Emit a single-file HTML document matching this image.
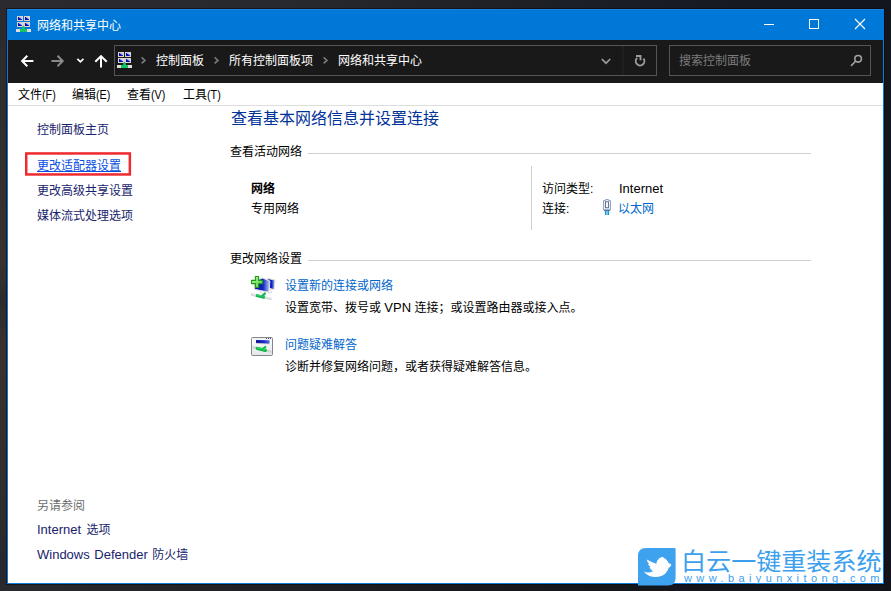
<!DOCTYPE html>
<html lang="zh-CN">
<head>
<meta charset="utf-8">
<title>网络和共享中心</title>
<style>
*{box-sizing:border-box;margin:0;padding:0}
html,body{width:891px;height:591px;overflow:hidden}
body{position:relative;font-family:"Liberation Sans","Noto Sans CJK SC",sans-serif;font-size:12px;line-height:16px;color:#000;
background:linear-gradient(113deg,#2a2a2f 0%,#28292e 25%,#212228 40%,#1d1f26 50%,#181a21 62%,#14161e 75%,#12131b 100%)}
a{text-decoration:none;color:inherit}
.a{position:absolute;white-space:nowrap;font-size:12px;line-height:16px}
#win{position:absolute;left:7px;top:9px;width:877px;height:575px;background:#fff;border:1px solid #0b7bdb;border-top:0;box-shadow:0 0 0 1px rgba(14,8,10,.6)}
#lstrip{position:absolute;left:0;top:0;width:6px;height:591px;background:linear-gradient(180deg,rgba(58,52,48,0) 0%,rgba(58,52,48,.55) 28%,rgba(58,52,48,.9) 44%,rgba(58,52,48,.1) 51%,rgba(58,52,48,.9) 58%,rgba(56,50,46,.7) 76%,rgba(56,50,46,0) 95%)}
#title{position:absolute;left:7px;top:9px;width:877px;height:31px;background:#0078d7;border-top:1px solid #1a85e0}
#nav{position:absolute;left:8px;top:40px;width:875px;height:43px;background:#191919}
.box{position:absolute;top:45px;height:31px;border:1px solid #555}
#addr{left:114px;width:543px}
#search{left:669px;width:202px}
#menuline{position:absolute;left:8px;top:105px;width:875px;height:1px;background:#dedede}
.en{font-size:13px}
.mn{display:inline-block;font-size:13.5px;transform:scaleX(.8);transform-origin:0 50%}
.w{color:#fff}
.nv{color:#17236c}
.lk{color:#0066cc}
.hr{position:absolute;height:1px;background:#d0d0d0}
.vr{position:absolute;width:1px;background:#d0d0d0}
.cj{display:inline-block;vertical-align:top;white-space:nowrap;font-family:"Liberation Sans","Noto Sans CJK SC",sans-serif}
svg{position:absolute;overflow:visible}
</style>
</head>
<body>
<div id="lstrip"></div>
<div id="win"></div>

<!-- title bar -->
<div id="title"></div>
<div class="a w" style="left:37px;top:18px"><span class="cj" style="width:7em">网络和共享中心</span></div>

<!-- navigation bar -->
<div id="nav"></div>
<div class="box" id="addr"></div>
<div class="box" id="search"></div>
<div class="a w" style="left:156px;top:53px"><span class="cj" style="width:4em">控制面板</span></div>
<div class="a w" style="left:229px;top:53px"><span class="cj" style="width:7em">所有控制面板项</span></div>
<div class="a w" style="left:338px;top:53px"><span class="cj" style="width:7em">网络和共享中心</span></div>
<div class="a" style="left:679px;top:53px;color:#7c7c7c"><span class="cj" style="width:6em">搜索控制面板</span></div>

<!-- menu bar -->
<div class="a" style="left:18px;top:87px"><span class="cj" style="width:2em">文件</span><span class="mn">(F)</span></div>
<div class="a" style="left:72px;top:87px"><span class="cj" style="width:2em">编辑</span><span class="mn">(E)</span></div>
<div class="a" style="left:127px;top:87px"><span class="cj" style="width:2em">查看</span><span class="mn">(V)</span></div>
<div class="a" style="left:183px;top:87px"><span class="cj" style="width:2em">工具</span><span class="mn">(T)</span></div>
<div id="menuline"></div>

<!-- left pane -->
<a class="a nv" style="left:37px;top:122px"><span class="cj" style="width:6em">控制面板主页</span></a>
<a class="a" style="left:37px;top:158px;color:#0a50e0"><span class="cj" style="width:7em">更改适配器设置</span></a>
<a class="a nv" style="left:37px;top:183px"><span class="cj" style="width:8em">更改高级共享设置</span></a>
<a class="a nv" style="left:37px;top:208px"><span class="cj" style="width:8em">媒体流式处理选项</span></a>
<div class="a" style="left:37px;top:498px;color:#6d6d6d"><span class="cj" style="width:4em">另请参阅</span></div>
<a class="a nv" style="left:37px;top:522px;word-spacing:2px"><span class="en">Internet</span> <span class="cj" style="width:2em">选项</span></a>
<a class="a nv" style="left:37px;top:547px;word-spacing:1px"><span class="en">Windows Defender</span> <span class="cj" style="width:3em">防火墙</span></a>

<!-- main pane -->
<div class="a" style="left:231px;top:108px;font-size:16px;line-height:22px;color:#003399"><span class="cj" style="width:13em">查看基本网络信息并设置连接</span></div>
<div class="a" style="left:230px;top:144px"><span class="cj" style="width:6em">查看活动网络</span></div>
<div class="hr" style="left:308px;top:153px;width:503px"></div>
<div class="a" style="left:251px;top:181px;font-weight:bold"><span class="cj" style="width:2em">网络</span></div>
<div class="a" style="left:251px;top:201px"><span class="cj" style="width:4em">专用网络</span></div>
<div class="vr" style="left:531px;top:166px;height:64px"></div>
<div class="a" style="left:542px;top:181px"><span class="cj" style="width:4em">访问类型</span>:</div>
<div class="a" style="left:619px;top:181px"><span class="en">Internet</span></div>
<div class="a" style="left:542px;top:201px"><span class="cj" style="width:2em">连接</span>:</div>
<a class="a lk" style="left:618px;top:201px"><span class="cj" style="width:3em">以太网</span></a>

<div class="a" style="left:230px;top:251px"><span class="cj" style="width:6em">更改网络设置</span></div>
<div class="hr" style="left:308px;top:260px;width:503px"></div>
<a class="a lk" style="left:285px;top:278px"><span class="cj" style="width:9em">设置新的连接或网络</span></a>
<div class="a" style="left:285px;top:300px"><span class="cj" style="width:8em">设置宽带、拨号或</span> <span class="en">VPN</span> <span class="cj" style="width:14em">连接；或设置路由器或接入点。</span></div>
<a class="a lk" style="left:285px;top:337px"><span class="cj" style="width:6em">问题疑难解答</span></a>
<div class="a" style="left:285px;top:359px"><span class="cj" style="width:21em">诊断并修复网络问题，或者获得疑难解答信息。</span></div>


<!-- vector overlay: all icons drawn in page coordinates -->
<svg width="891" height="591" viewBox="0 0 891 591" style="left:0;top:0">
<defs>
  <linearGradient id="scr" x1="0" y1="1" x2="1" y2="0">
    <stop offset="0" stop-color="#00008c"/><stop offset=".5" stop-color="#0a14c8"/><stop offset=".62" stop-color="#9db4f5"/><stop offset="1" stop-color="#dfe8ff"/>
  </linearGradient>
  <g id="nsc">
    <rect x="1" y="0" width="6" height="5" fill="#dfd2c6"/><rect x="8" y="0" width="6" height="5" fill="#dfd2c6"/>
    <rect x="1" y="6" width="6" height="5" fill="#dfd2c6"/><rect x="8" y="6" width="6" height="5" fill="#dfd2c6"/>
    <rect x="7" y="6" width="1" height="5" fill="#d9d9d9"/>
    <rect x="2" y="1" width="4" height="3" fill="url(#scr)"/><rect x="9" y="1" width="4" height="3" fill="url(#scr)"/>
    <rect x="2" y="7" width="4" height="3" fill="url(#scr)"/><rect x="9" y="7" width="4" height="3" fill="url(#scr)"/>
    <rect x="0" y="13" width="15" height="3" fill="#e4dcd6"/>
    <rect x="4" y="13" width="7" height="3" fill="#12c566"/>
    <path d="M6 13.2 L6.3 11.6 L7 9.8 H8 L8.7 11.6 L9 13.2 Z" fill="#12c566"/>
  </g>
  <linearGradient id="mon" x1="0" y1="0" x2="1" y2="0">
    <stop offset="0" stop-color="#0a10a8"/><stop offset=".55" stop-color="#1224c2"/><stop offset=".85" stop-color="#7f98ea"/><stop offset="1" stop-color="#c9d5fa"/>
  </linearGradient>
  <linearGradient id="plus" x1="0" y1="0" x2="1" y2="1">
    <stop offset="0" stop-color="#b8f4a4"/><stop offset="1" stop-color="#4fcf3c"/>
  </linearGradient>
  <linearGradient id="pipe" x1="0" y1="0" x2="0" y2="1">
    <stop offset="0" stop-color="#f4f4f4"/><stop offset="1" stop-color="#b4b8bc"/>
  </linearGradient>
  <linearGradient id="gpipe" x1="0" y1="0" x2="0" y2="1">
    <stop offset="0" stop-color="#2fe070"/><stop offset="1" stop-color="#089a3c"/>
  </linearGradient>
  <linearGradient id="wnd" x1="0" y1="0" x2="0" y2="1">
    <stop offset="0" stop-color="#ffffff"/><stop offset="1" stop-color="#e4e6e8"/>
  </linearGradient>
  <linearGradient id="bbar" x1="0" y1="0" x2="1" y2="0">
    <stop offset="0" stop-color="#0a10a0"/><stop offset=".6" stop-color="#1a2cc4"/><stop offset="1" stop-color="#5a74e0"/>
  </linearGradient>
</defs>

<!-- title bar icon + caption buttons -->
<use href="#nsc" x="16" y="16"/>
<rect x="764" y="24" width="10" height="1" fill="#fff"/>
<rect x="809.5" y="19.5" width="9" height="9" fill="none" stroke="#fff" stroke-width="1"/>
<path d="M855 19 L865 29 M865 19 L855 29" stroke="#fff" stroke-width="1.15" fill="none"/>

<!-- nav arrows -->
<g fill="none" stroke-width="2" stroke-linecap="butt" stroke-linejoin="miter">
  <path d="M33.4 61 H22.8 M27.3 55.8 L22.1 61 L27.3 66.2" stroke="#fff"/>
  <path d="M51.4 61 H62 M57.5 55.8 L62.7 61 L57.5 66.2" stroke="#8a8a8a"/>
  <path d="M101 67.5 V56.5 M95.3 61.8 L101 56.1 L106.7 61.8" stroke="#fff"/>
</g>
<path d="M77.4 58.8 L80.4 61.8 L83.4 58.8" fill="none" stroke="#fff" stroke-width="1.7"/>

<!-- address bar -->
<use href="#nsc" x="117" y="52"/>
<g fill="none" stroke="#7e7e7e" stroke-width="1.5">
  <path d="M141.6 57.4 L145 60.4 L141.6 63.4"/>
  <path d="M214.6 57.4 L218 60.4 L214.6 63.4"/>
  <path d="M323.6 57.4 L327 60.4 L323.6 63.4"/>
</g>
<rect x="622.5" y="46" width="1" height="29" fill="#272727"/>
<path d="M601.8 59 L606 63.2 L610.2 59" fill="none" stroke="#9a9a9a" stroke-width="1.7"/>
<!-- refresh -->
<g fill="none" stroke="#9c9c9c" stroke-width="1.9">
  <path d="M643.5 58.6 A4.3 4.3 0 1 1 637.2 58"/>
  <path d="M636 56 H640.5 V60.3"/>
</g>
<!-- search magnifier -->
<g fill="none" stroke="#a2a2a2" stroke-width="1.6">
  <circle cx="858.1" cy="58.8" r="3.3"/>
  <path d="M855.6 61.3 L851 65.9"/>
</g>

<!-- red highlight box -->
<rect x="26.25" y="153.45" width="103.6" height="21" fill="none" stroke="#ee2a2e" stroke-width="2.5"/>

<!-- link underline -->
<rect x="37" y="171" width="84" height="1" fill="#0a50e0"/>

<!-- ethernet plug -->
<g>
  <path d="M605.5 199.5 H608.5 V200.5 H610.5 V210 H603.5 V200.5 H605.5 Z" fill="#e9eff9" stroke="#98a4c0" stroke-width="1"/>
  <rect x="605.5" y="201.7" width="3" height="6" fill="#f7f9fd" stroke="#6a7592" stroke-width="1"/>
  <rect x="604" y="209.8" width="6" height="1" fill="#4c5a7c"/>
  <rect x="604.9" y="210.8" width="1.7" height="4.2" fill="#1c9ad6"/>
  <rect x="607.4" y="210.8" width="1.7" height="4.2" fill="#1c9ad6"/>
</g>

<!-- set up a new connection icon -->
<g>
  <path d="M267.6 278.6 L275.1 280.1 L274 289.6 L269.3 288.3 Z" fill="url(#mon)" stroke="#e9e2d4" stroke-width=".9"/>
  <path d="M270 289 L272 292 L268.5 293.3" fill="none" stroke="#d8d8d8" stroke-width="1"/>
  <path d="M262.7 278.1 L269.9 281 L268.9 292.3 L254.4 289.2 L254.8 281 Z" fill="url(#mon)" stroke="#ece4d6" stroke-width=".9"/>
  <path d="M260 291 L262.5 294.5" stroke="#dcdcdc" stroke-width="1.2" fill="none"/>
  <path d="M252 294.5 L270.4 298.8" stroke="#d3d7d9" stroke-width="2.7" stroke-linecap="round" fill="none"/>
  <path d="M252 294 L270.4 298.3" stroke="#eceeef" stroke-width="1" stroke-linecap="round" fill="none"/>
  <path d="M256 295.4 L264.8 297.5" stroke="#13b64f" stroke-width="3" fill="none"/>
  <path d="M256.2 294.6 L264.6 296.6" stroke="#3fdc7c" stroke-width="1" fill="none"/>
  <path d="M262.8 295.6 L264.9 293.5" stroke="#13b64f" stroke-width="2.3" stroke-linecap="round" fill="none"/>
  <path d="M255.4 276.5 H258.6 V280.4 H262.5 V283.6 H258.6 V287.5 H255.4 V283.6 H251.5 V280.4 H255.4 Z" fill="url(#plus)" stroke="#1d9a12" stroke-width="1.1" stroke-linejoin="round"/>
</g>

<!-- troubleshoot icon -->
<g>
  <rect x="251.5" y="337.5" width="21" height="18" rx="1.3" fill="url(#wnd)" stroke="#85878f" stroke-width="1"/>
  <rect x="252" y="338" width="20" height="1.4" fill="#eef0f4"/>
  <rect x="266" y="338" width="1" height="1" fill="#3a48a8"/><rect x="268" y="338" width="1" height="1" fill="#3a48a8"/><rect x="270" y="338" width="1" height="1" fill="#3a48a8"/>
  <path d="M255.9 339.9 L269.7 340.3 L269.4 344 L256.2 343.3 Z" fill="url(#bbar)"/>
  <path d="M256.2 343.5 L269.4 344.2" stroke="#e6dcc0" stroke-width=".8" fill="none"/>
  <path d="M252.6 347.2 L271.4 351.9" stroke="#cfd3d6" stroke-width="2.3" fill="none"/>
  <path d="M257.3 348.4 L265.3 350.3" stroke="#11b845" stroke-width="3.3" stroke-linecap="round" fill="none"/>
  <path d="M257.2 347.7 L265 349.5" stroke="#3be070" stroke-width="1.1" stroke-linecap="round" fill="none"/>
  <path d="M263.2 348.6 L265.2 347.1" stroke="#16c24c" stroke-width="2.4" stroke-linecap="round" fill="none"/>
</g>

<!-- watermark logo -->
<g>
  <path d="M646 548 H674.5 Q675.6 548 675.6 549.2 V578 Q675.6 585.5 668 585.5 H638 V556 Q638 548 646 548 Z" fill="#3fa2ef"/>
  <path fill="#fdfeff" d="M662.3 557.1 L663.2 556.9 L663.9 558 Q665.8 558.4 667.4 560.9 Q668.2 562 668.5 563.1 L671.3 564.3 L670.4 566.7 L668.7 567.7 Q668.3 570.2 665.4 573.4 Q662 576.7 655.5 577.1 Q648.6 577.1 643.5 571.5 Q648.2 573.5 653 571.2 Q650.5 569.6 649.5 567.6 L650.4 566.6 Q648.5 565.8 648 564.6 L649.1 563.9 Q647.1 562 646.8 559.5 Q651.5 562.2 656.3 563.7 Q657 560 659 558.4 Q660.5 557.2 662.3 557.1 Z"/>
</g>
</svg>

<!-- watermark -->
<div class="a" style="left:680.5px;top:547px;font-size:23.5px;line-height:30px;transform:scaleX(1.067);transform-origin:0 0;color:#3d9fee"><span class="cj" style="width:8em">白云一键重装系统</span></div>
<div class="a" style="left:684px;top:572px;font-size:11px;line-height:12px;letter-spacing:4.4px;color:#3d9fee">www.baiyunxitong.com</div>
</body>
</html>
